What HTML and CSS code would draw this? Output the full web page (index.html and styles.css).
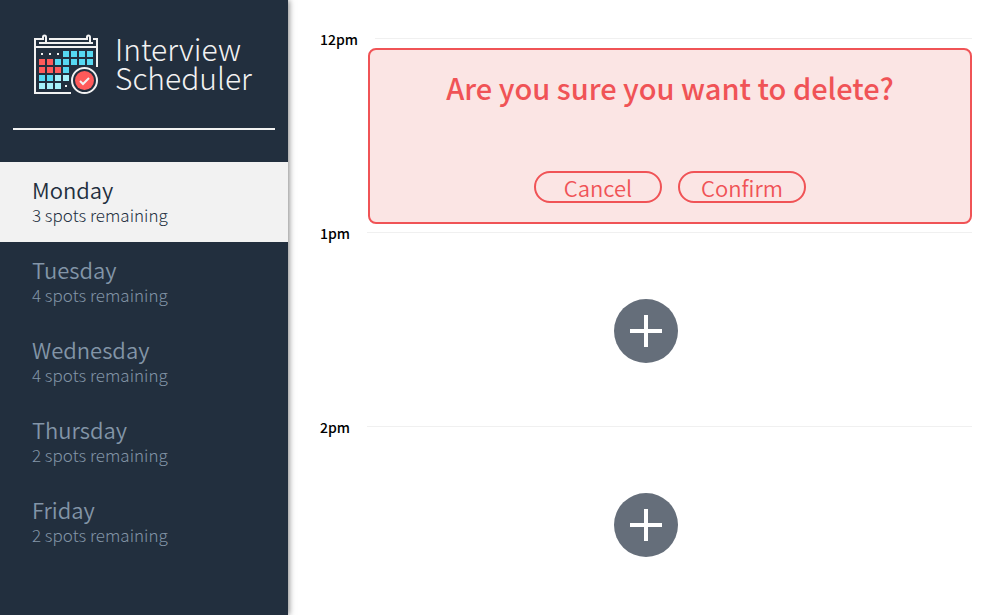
FILE: index.html
```html
<!DOCTYPE html>
<html lang="en">
<head>
<meta charset="utf-8">
<title>Interview Scheduler</title>
<link rel="stylesheet" href="styles.css">
</head>
<body>
<div class="layout">
  <aside class="sidebar">
    <div class="brand">
      <svg class="brand-icon" viewBox="0 0 65 61" aria-hidden="true">
        <g fill="none" stroke="#f2f2f2" stroke-width="2">
          <path d="M12 9V3a1.500 1.500 0 0 0-3 0v2H1v54h36M15 5h38V3a1.500 1.500 0 0 1 3 0v6M59 5h4v28M5 9h54M1 13h62"/>
        </g>
        <path fill="#f2f2f2" d="M7 19h2v2H7zM15 19h2v2h-2zM23 19h2v2h-2zM31 51h2v2h-2z"/>
        <path fill="#ff5a5a" d="M5 25h6v6H5zM13 25h6v6h-6zM5 33h6v6H5zM13 33h6v6h-6zM21 33h6v6h-6z"/>
        <path fill="#56d9f2" d="M29 17h6v6h-6zM37 17h6v6h-6zM45 17h6v6h-6zM53 17h6v6h-6zM21 25h6v6h-6zM29 25h6v6h-6zM37 25h6v6h-6zM45 25h6v6h-6zM53 25h6v6h-6zM29 33h6v6h-6zM5 41h6v6H5zM13 41h6v6h-6z"/>
        <path fill="#a6f1fa" d="M21 41h6v6h-6zM29 41h6v6h-6zM5 49h6v6H5zM13 49h6v6h-6zM21 49h6v6h-6z"/>
        <circle cx="50.500" cy="46.500" r="12.500" fill="#222f3e" stroke="#f2f2f2" stroke-width="2"/>
        <circle cx="50.500" cy="46.500" r="9.500" fill="#ff5a5a"/>
        <path d="M46 47l3 3 6-6" fill="none" stroke="#f2f2f2" stroke-width="2"/>
      </svg>
      <h1 class="brand-name">Interview<br>Scheduler</h1>
    </div>
    <hr class="divider">
    <nav>
      <ul class="days">
        <li><a class="day day-selected" href="#"><span class="day-name">Monday</span><span class="day-spots">3 spots remaining</span></a></li>
        <li><a class="day" href="#"><span class="day-name">Tuesday</span><span class="day-spots">4 spots remaining</span></a></li>
        <li><a class="day" href="#"><span class="day-name">Wednesday</span><span class="day-spots">4 spots remaining</span></a></li>
        <li><a class="day" href="#"><span class="day-name">Thursday</span><span class="day-spots">2 spots remaining</span></a></li>
        <li><a class="day" href="#"><span class="day-name">Friday</span><span class="day-spots">2 spots remaining</span></a></li>
      </ul>
    </nav>
  </aside>
  <main class="schedule">
    <article class="slot">
      <header class="slot-header"><h2 class="slot-time">12pm</h2><hr class="slot-line"></header>
      <section class="confirm">
        <h3 class="confirm-text">Are you sure you want to delete?</h3>
        <div class="confirm-actions">
          <button class="button" type="button">Cancel</button>
          <button class="button" type="button">Confirm</button>
        </div>
      </section>
    </article>
    <article class="slot">
      <header class="slot-header"><h2 class="slot-time">1pm</h2><hr class="slot-line"></header>
      <div class="empty">
        <button class="add" type="button" aria-label="Add"><svg class="plus" viewBox="0 0 32 32"><path d="M14 0h4v14h14v4H18v14h-4V18H0v-4h14z"/></svg></button>
      </div>
    </article>
    <article class="slot">
      <header class="slot-header"><h2 class="slot-time">2pm</h2><hr class="slot-line"></header>
      <div class="empty">
        <button class="add" type="button" aria-label="Add"><svg class="plus" viewBox="0 0 32 32"><path d="M14 0h4v14h14v4H18v14h-4V18H0v-4h14z"/></svg></button>
      </div>
    </article>
  </main>
</div>
</body>
</html>
```
FILE: styles.css
```css
* {
  box-sizing: border-box;
}

body,
h1,
h2,
h3,
ul {
  margin: 0;
  padding: 0;
}

body {
  font-family: "Source Sans Pro", "Noto Sans CJK JP", sans-serif;
  background: #fff;
}

.layout {
  display: flex;
  min-height: 100vh;
}

.sidebar {
  flex: 0 0 288px;
  background: #222f3e;
  box-shadow: 1px 0 6px rgba(0, 0, 0, 0.5);
}

.brand {
  display: flex;
  align-items: flex-start;
  gap: 16px;
  padding: 34px 32px 33px 34px;
}

.brand-icon {
  width: 65px;
  height: 61px;
}

.brand-name {
  color: #f2f2f2;
  font-size: 30px;
  font-weight: 300;
  line-height: 29px;
}

.divider {
  height: 2px;
  margin: 0 13px 32px;
  border: 0;
  background: #f2f2f2;
}

.days {
  list-style: none;
}

.day {
  display: flex;
  flex-direction: column;
  justify-content: center;
  height: 80px;
  padding: 0 32px 2px;
  color: #8395a7;
  text-decoration: none;
}

.day-selected {
  color: #222f3e;
  background: #f2f2f2;
}

.day-name {
  font-size: 22px;
  font-weight: 350;
  line-height: 28px;
}

.day-spots {
  font-size: 17px;
  font-weight: 300;
  line-height: 24px;
}

.schedule {
  flex: 1;
  padding: 30px 25px 0 32px;
}

.slot-header {
  display: flex;
  align-items: center;
  gap: 17px;
}

.slot-time {
  font-size: 14px;
  font-weight: 500;
  line-height: 18px;
}

.slot-line {
  flex: 1;
  height: 1px;
  margin: 0 0 2px;
  border: 0;
  background: #f0f0f0;
}

.confirm {
  display: flex;
  flex-direction: column;
  align-items: center;
  justify-content: space-between;
  height: 176px;
  margin-left: 48px;
  padding: 17px 16px 19px;
  color: #f05356;
  background: #fbe5e4;
  border: 2px solid #f05356;
  border-radius: 8px;
}

.confirm-text {
  font-size: 29px;
  font-weight: 500;
  line-height: 40px;
}

.confirm-actions {
  display: flex;
  gap: 16px;
}

.button {
  width: 128px;
  height: 32px;
  padding: 0;
  color: inherit;
  background: none;
  border: 2px solid #f05356;
  border-radius: 16px;
  font-family: inherit;
  font-size: 22px;
  font-weight: 350;
  line-height: 26px;
}

.empty {
  display: flex;
  align-items: center;
  justify-content: center;
  height: 176px;
  padding-top: 2px;
}

.add {
  display: flex;
  align-items: center;
  justify-content: center;
  width: 64px;
  height: 64px;
  padding: 0;
  background: #656e7a;
  border: 0;
  border-radius: 50%;
}

.plus {
  width: 32px;
  height: 32px;
  fill: #fff;
}
```
